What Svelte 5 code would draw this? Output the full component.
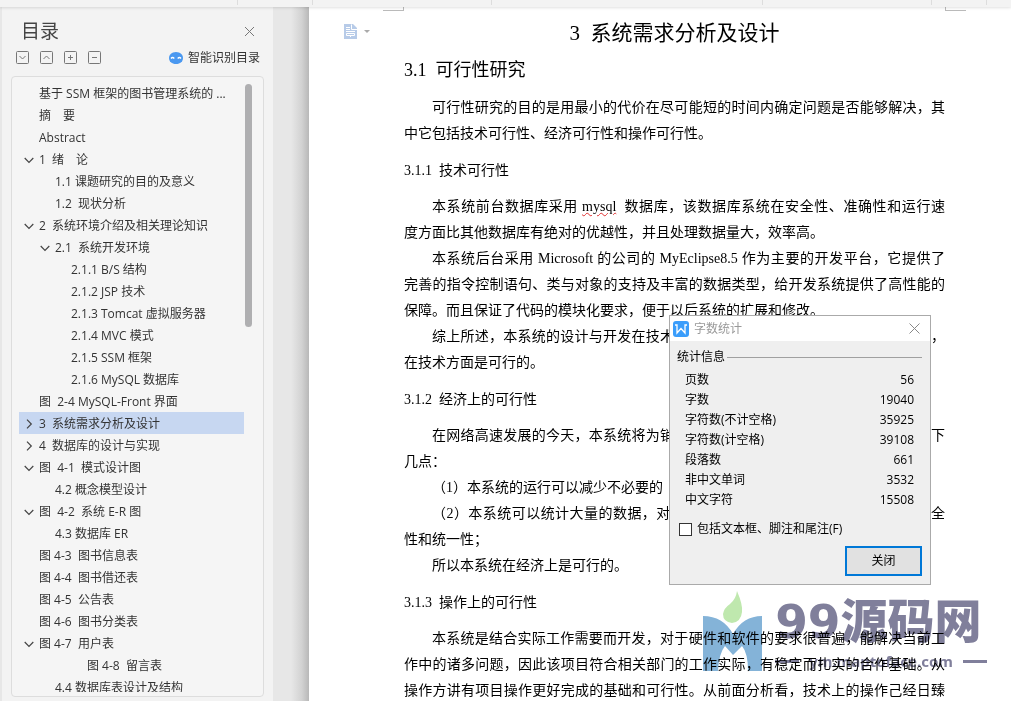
<script>
  const outline = [
    { level: 0, text: "基于 SSM 框架的图书管理系统的 ..." },
    { level: 0, text: "摘　要" },
    { level: 0, text: "Abstract" },
    { level: 0, text: "1  绪　论", arrow: "open" },
    { level: 1, text: "1.1 课题研究的目的及意义" },
    { level: 1, text: "1.2  现状分析" },
    { level: 0, text: "2  系统环境介绍及相关理论知识", arrow: "open" },
    { level: 1, text: "2.1  系统开发环境", arrow: "open" },
    { level: 2, text: "2.1.1 B/S 结构" },
    { level: 2, text: "2.1.2 JSP 技术" },
    { level: 2, text: "2.1.3 Tomcat 虚拟服务器" },
    { level: 2, text: "2.1.4 MVC 模式" },
    { level: 2, text: "2.1.5 SSM 框架" },
    { level: 2, text: "2.1.6 MySQL 数据库" },
    { level: 0, text: "图  2-4 MySQL-Front 界面" },
    { level: 0, text: "3  系统需求分析及设计", arrow: "closed" },
    { level: 0, text: "4  数据库的设计与实现", arrow: "closed" },
    { level: 0, text: "图  4-1  模式设计图", arrow: "open" },
    { level: 1, text: "4.2 概念模型设计" },
    { level: 0, text: "图  4-2  系统 E-R 图", arrow: "open" },
    { level: 1, text: "4.3 数据库 ER" },
    { level: 0, text: "图 4-3  图书信息表" },
    { level: 0, text: "图 4-4  图书借还表" },
    { level: 0, text: "图 4-5  公告表" },
    { level: 0, text: "图 4-6  图书分类表" },
    { level: 0, text: "图 4-7  用户表", arrow: "open" },
    { level: 3, text: "图 4-8  留言表" },
    { level: 1, text: "4.4 数据库表设计及结构" },
  ];

  const stats = [
    ["页数", 56],
    ["字数", 19040],
    ["字符数(不计空格)", 35925],
    ["字符数(计空格)", 39108],
    ["段落数", 661],
    ["非中文单词", 3532],
    ["中文字符", 15508],
  ];

  const tools = [
    { label: "展开", d: "M3.5 5 L6.5 8 L9.5 5" },
    { label: "收起", d: "M3.5 8 L6.5 5 L9.5 8" },
    { label: "展开全部", d: "M4 6.5 H9 M6.5 4 V9" },
    { label: "收起全部", d: "M4 6.5 H9" },
  ];

  let selected = $state(15);
  let includeNotes = $state(false);
  let dialogOpen = $state(true);
</script>

<div class="app">
  <div class="topbar">
    <i></i><i></i><i></i><i></i><i></i><i></i>
  </div>

  <div class="workspace">
    <aside class="sidebar">
      <header class="sidebar__head">
        <h2>目录</h2>
        <button class="icon-button" aria-label="关闭目录">
          <svg width="11" height="11" viewBox="0 0 11 11"><path d="M1 1 L10 10 M10 1 L1 10" stroke="#777" fill="none" /></svg>
        </button>
      </header>

      <div class="sidebar__tools">
        {#each tools as tool}
          <button class="icon-button" aria-label={tool.label}>
            <svg width="13" height="13" viewBox="0 0 13 13" fill="none" stroke="#777">
              <rect x="0.5" y="0.5" width="12" height="12" rx="1" />
              <path d={tool.d} />
            </svg>
          </button>
        {/each}
        <button class="smart">
          <svg width="14" height="12" viewBox="0 0 14 12">
            <path d="M4 0.5 Q7 -0.5 10 0.5 Q14 2 14 6 Q14 10 10 11.5 Q7 12.5 4 11.5 Q0 10 0 6 Q0 2 4 0.5Z" fill="#4a98f0" />
            <path d="M2 6.5 Q3.5 4.5 5.3 6.5 M8.7 6.5 Q10.5 4.5 12 6.5" stroke="#fff" stroke-width="1.3" fill="none" />
          </svg>
          智能识别目录
        </button>
      </div>

      <nav class="outline">
        <ul>
          {#each outline as item, i}
            <li>
              <button
                class="outline__item outline__item--l{item.level}"
                class:outline__item--active={selected === i}
                onclick={() => selected = i}
              >
                <span class="outline__arrow">
                  {#if item.arrow}
                    <svg width="10" height="10" viewBox="0 0 10 10" fill="none" stroke="#444" stroke-width="1.2">
                      <path d={item.arrow === "open" ? "M0.7 3 L5 7.3 L9.3 3" : "M3 0.7 L7.3 5 L3 9.3"} />
                    </svg>
                  {/if}
                </span>
                <span>{item.text}</span>
              </button>
            </li>
          {/each}
        </ul>
        <div class="outline__scroll"><div class="outline__thumb"></div></div>
      </nav>
    </aside>

    <div class="gutter"></div>

    <main class="page">
      <span class="crop crop--left"></span>
      <span class="crop crop--right"></span>
      <button class="page__menu" aria-label="目录选项">
        <svg width="26" height="16" viewBox="0 0 26 16">
          <path d="M0 0 H9 L13 4 V15 H0Z" fill="#b7cbe8" />
          <path d="M7.5 0.5 V5.5 H13 M2 3.5 H6 M2 5.5 H6 M2 7.5 H11 M2.5 9.5 H10.5 V11.5 H2.5Z M6.5 11 V13" stroke="#fff" fill="none" />
          <path d="M20 6 H26 L23 9Z" fill="#aaa" />
        </svg>
      </button>

      <article>
        <h1>3&nbsp; 系统需求分析及设计</h1>
        <h2>3.1&nbsp; 可行性研究</h2>
        <p>可行性研究的目的是用最小的代价在尽可能短的时间内确定问题是否能够解决，其中它包括技术可行性、经济可行性和操作可行性。</p>

        <h3>3.1.1&nbsp; 技术可行性</h3>
        <p>
          <span class="full">本系统前台数据库采用 <span class="typo">mysql</span>&nbsp; 数据库，该数据库系统在安全性、准确性和运行速</span>
          <span class="rest">度方面比其他数据库有绝对的优越性，并且处理数据量大，效率高。</span>
        </p>
        <p>
          <span class="full">本系统后台采用 Microsoft 的公司的 MyEclipse8.5 作为主要的开发平台，它提供了</span>
          <span class="rest">完善的指令控制语句、类与对象的支持及丰富的数据类型，给开发系统提供了高性能的保障。而且保证了代码的模块化要求，便于以后系统的扩展和修改。</span>
        </p>
        <p>综上所述，本系统的设计与开发在技术上所采用的工具都已经十分成熟和规范化，在技术方面是可行的。</p>

        <h3>3.1.2&nbsp; 经济上的可行性</h3>
        <p>在网络高速发展的今天，本系统将为销售和管理带来较大的效益，主要包括有以下几点：</p>
        <p>（1）本系统的运行可以减少不必要的</p>
        <p>
          <span class="full">（2）本系统可以统计大量的数据，对数据进行统一管理和维护，保证数据的安全</span>
          <span class="rest">性和统一性；</span>
        </p>
        <p>所以本系统在经济上是可行的。</p>

        <h3>3.1.3&nbsp; 操作上的可行性</h3>
        <p>本系统是结合实际工作需要而开发，对于硬件和软件的要求很普遍，能解决当前工作中的诸多问题，因此该项目符合相关部门的工作实际，有稳定而扎实的合作基础。从操作方讲有项目操作更好完成的基础和可行性。从前面分析看，技术上的操作己经日臻成熟。</p>
      </article>
    </main>
  </div>

  <div class="watermark">
    <svg width="60" height="80" viewBox="0 0 60 80">
      <path d="M34 0 Q40 14 39 21 Q38 31 29 32 Q20 31 20 23 Q21 17 27 13 Q33 8 34 0Z" fill="#bfe8ae" />
      <path d="M0 25 Q20 25 30 43 Q40 25 59 25 V80 H45 Q45 62 39 55 L30 64 L22 55 Q16 62 15 80 H0Z" fill="#84b3d8" />
    </svg>
    <div class="watermark__text">
      <div class="watermark__name">99源码网</div>
      <div class="watermark__url"><i></i>ym.maptoface.com<i></i></div>
    </div>
  </div>

  {#if dialogOpen}
    <div class="dialog" role="dialog" aria-labelledby="dialog-title">
      <div class="dialog__title">
        <svg width="16" height="16" viewBox="0 0 16 16">
          <rect width="16" height="16" rx="3" fill="#3a9dfb" />
          <path d="M2 4 H4 V12 L8 7.5 L12 12 V4 H14" stroke="#fff" stroke-width="1.3" fill="none" />
        </svg>
        <span id="dialog-title">字数统计</span>
        <button class="icon-button" aria-label="关闭窗口" onclick={() => dialogOpen = false}>
          <svg width="11" height="11" viewBox="0 0 11 11"><path d="M0.5 0.5 L10.5 10.5 M10.5 0.5 L0.5 10.5" stroke="#888" fill="none" /></svg>
        </button>
      </div>
      <div class="dialog__body">
        <div class="dialog__group">统计信息</div>
        <table>
          <tbody>
            {#each stats as [name, value]}
              <tr><th scope="row">{name}</th><td>{value}</td></tr>
            {/each}
          </tbody>
        </table>
        <label class="dialog__check">
          <input type="checkbox" bind:checked={includeNotes} />
          包括文本框、脚注和尾注(F)
        </label>
        <button class="dialog__close" onclick={() => dialogOpen = false}>关闭</button>
      </div>
    </div>
  {/if}
</div>

<style>
  :global(body) { margin: 0; overflow: hidden; }
  .app {
    position: relative;
    display: flex; flex-direction: column;
    height: 100vh; overflow: hidden;
    font: 12px/20px "Open Sans", "Noto Sans CJK SC", sans-serif;
    color: #333;
  }
  button {
    font: inherit; color: inherit; background: none;
    border: none; padding: 0; cursor: pointer;
  }
  svg { display: block; }
  .icon-button { display: block; }

  .topbar {
    display: grid;
    grid-template-columns: 238fr 75fr 179fr 271fr 169fr 55fr 24fr;
    height: 7px; flex-shrink: 0; background: #f3f3f3;
    box-shadow: 0 1px 3px rgba(0, 0, 0, 0.12); z-index: 1;
  }
  .topbar i { height: 5px; border-right: 1px solid #ddd; }

  .workspace { display: flex; flex: 1; min-height: 0; }

  .sidebar {
    display: flex; flex-direction: column;
    width: 253px; flex-shrink: 0;
    padding: 12px 9px 4px; background: #f3f3f3;
    border-left: 2px solid #e7e7e7;
  }
  .sidebar__head {
    display: flex; align-items: center; justify-content: space-between;
    height: 24px; padding: 0 9px 0 10px;
  }
  .sidebar__head h2 { margin: 0; font-size: 19px; font-weight: 400; color: #444; }
  .sidebar__tools {
    display: flex; align-items: center; gap: 11px;
    height: 28px; padding: 0 4px 5px 5px;
  }
  .smart { display: flex; align-items: center; gap: 5px; margin-left: auto; padding-top: 2px; }

  .outline {
    display: flex; flex: 1; min-height: 0;
    padding: 5px 11px 4px 7px;
    border: 1px solid #ddd; border-radius: 4px; background: #f5f5f5;
  }
  .outline ul { flex: 1; margin: 0; padding: 0; list-style: none; overflow: hidden; }
  .outline__item {
    display: flex; align-items: center; gap: 5px;
    width: 100%; height: 22px; padding: 2px 0 0 5px;
    white-space: pre; text-align: left;
  }
  .outline__item--l1 { padding-left: 21px; }
  .outline__item--l2 { padding-left: 37px; }
  .outline__item--l3 { padding-left: 53px; }
  .outline__item--active { background: #c7d7f1; }
  .outline__arrow { width: 10px; flex-shrink: 0; }
  .outline__scroll { width: 8px; padding-top: 2px; }
  .outline__thumb { width: 7px; height: 40%; margin-left: 1px; border-radius: 4px; background: #afafb1; }

  .gutter {
    width: 36px; flex-shrink: 0;
    background: linear-gradient(to right, #e7e7e7 50%, #d2d2d2 80%, #b8b8b8);
  }

  .page {
    position: relative; flex: 1; min-width: 0;
    padding: 10px 66px 0 95px; background: #fff; color: #000;
  }
  .page__menu { position: absolute; left: 35px; top: 17px; }
  .crop {
    position: absolute; top: 0; width: 20px; height: 3px;
    border: 1px solid #bbb; border-top: none;
  }
  .crop--left { left: 74px; border-left: none; }
  .crop--right { right: 45px; border-right: none; }

  article { font: 14px/26px "Liberation Serif", "Noto Sans CJK SC", serif; }
  article h1, article h2, article h3 { margin: 0; font-weight: 400; }
  article h1 { font-size: 21px; line-height: 32px; text-align: center; }
  article h2 { font-size: 18px; line-height: 26px; margin: 8px 0 12px; }
  article h3 { font-size: 14px; margin: 11px 0 10px; }
  article p { margin: 0; text-indent: 2em; text-align: justify; }
  .full { display: block; text-align-last: justify; white-space: nowrap; }
  .rest { display: block; text-indent: 0; }
  .typo { text-decoration: underline wavy #e03030 1px; text-underline-offset: 1px; }

  .watermark {
    position: absolute; right: 24px; top: 591px;
    display: flex; gap: 12px;
    color: #807f9b; mix-blend-mode: multiply; pointer-events: none;
  }
  .watermark__name {
    margin-top: 7px;
    font: 900 47px/48px "DejaVu Sans", "Noto Sans CJK SC", sans-serif;
  }
  .watermark__url {
    display: flex; align-items: center; justify-content: space-between; gap: 10px;
    font: 700 15px/30px "Noto Sans", sans-serif;
  }
  .watermark__url i { width: 24px; height: 3px; background: #807f9b; }

  .dialog {
    position: absolute; right: 80px; top: 315px; z-index: 2;
    width: 260px; border: 1px solid #aaa; background: #efefef; color: #000;
  }
  .dialog__title {
    display: flex; align-items: center; gap: 5px;
    height: 25px; padding: 0 10px 0 3px; background: #fff; color: #999;
  }
  .dialog__title button { margin-left: auto; }
  .dialog__body {
    display: flex; flex-direction: column;
    padding: 6px 8px 8px 7px;
  }
  .dialog__group { display: flex; align-items: center; }
  .dialog__group::after { content: ""; flex: 1; height: 1px; margin-left: 2px; background: #a0a0a0; }
  table { margin: 3px 8px 0; border-collapse: collapse; }
  th, td { height: 20px; padding: 0; font-weight: 400; text-align: left; }
  td { text-align: right; }
  .dialog__check { display: flex; align-items: center; gap: 5px; margin: 9px 0 7px 2px; }
  .dialog__check input {
    appearance: none; width: 13px; height: 13px; margin: 0;
    border: 1px solid #333; background: #fff;
  }
  .dialog__check input:checked { background: #0078d7; }
  .dialog__close {
    align-self: flex-end; width: 77px; height: 30px;
    border: 2px solid #0078d7; background: #e1e1e1;
  }
</style>
